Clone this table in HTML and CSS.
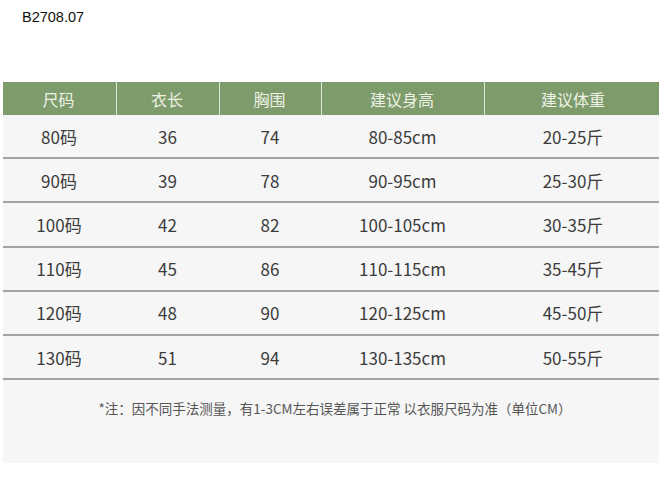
FILE: index.html
```html
<!DOCTYPE html>
<html lang="zh">
<head>
<meta charset="utf-8">
<link rel="stylesheet" href="styles.css">
</head>
<body>
<div class="code">B2708.07</div>
<div class="panel">
  <div class="row head">
    <div class="cell">尺码</div>
    <div class="cell">衣长</div>
    <div class="cell">胸围</div>
    <div class="cell">建议身高</div>
    <div class="cell">建议体重</div>
  </div>
  <div class="row">
    <div class="cell">80码</div><div class="cell">36</div><div class="cell">74</div><div class="cell">80-85cm</div><div class="cell">20-25斤</div>
  </div>
  <div class="row">
    <div class="cell">90码</div><div class="cell">39</div><div class="cell">78</div><div class="cell">90-95cm</div><div class="cell">25-30斤</div>
  </div>
  <div class="row">
    <div class="cell">100码</div><div class="cell">42</div><div class="cell">82</div><div class="cell">100-105cm</div><div class="cell">30-35斤</div>
  </div>
  <div class="row">
    <div class="cell">110码</div><div class="cell">45</div><div class="cell">86</div><div class="cell">110-115cm</div><div class="cell">35-45斤</div>
  </div>
  <div class="row">
    <div class="cell">120码</div><div class="cell">48</div><div class="cell">90</div><div class="cell">120-125cm</div><div class="cell">45-50斤</div>
  </div>
  <div class="row">
    <div class="cell">130码</div><div class="cell">51</div><div class="cell">94</div><div class="cell">130-135cm</div><div class="cell">50-55斤</div>
  </div>
  <div class="note">*注：因不同手法测量，有1-3CM左右误差属于正常 以衣服尺码为准（单位CM）</div>
</div>
</body>
</html>
```
FILE: styles.css
```css
html, body {
  margin: 0;
  padding: 0;
  background: #ffffff;
  overflow: hidden;
}
body {
  width: 659px;
  height: 491px;
  font-family: "Noto Sans CJK SC", "Noto Sans", sans-serif;
}
.code {
  font-family: "Liberation Sans", Arial, sans-serif;
  font-size: 14.5px;
  color: #111;
  padding: 9px 0 0 22px;
  height: 82px;
  box-sizing: border-box;
  line-height: 16px;
}
.panel {
  margin-left: 3px;
  width: 660px;
  height: 381px;
  background: #f6f6f6;
  box-sizing: border-box;
}
.row {
  display: grid;
  grid-template-columns: 114px 103px 102px 163px 1fr;
  height: 44.2px;
  border-bottom: 2px solid #a3a3a3;
  box-sizing: border-box;
  color: #3c3c3c;
  font-size: 17px;
}
.row .cell {
  display: flex;
  align-items: center;
  justify-content: center;
  padding-right: 2px;
}
.row.head {
  height: 33px;
  background: #7d9b6b;
  border-bottom: none;
  color: #eef2e6;
  font-size: 16px;
}
.row.head .cell {
  border-right: 1px solid #dfe8d5;
}
.row.head .cell:last-child {
  border-right: none;
}
.note {
  text-align: center;
  font-size: 13.5px;
  color: #555;
  padding: 18px 0 0 4px;
}
```
